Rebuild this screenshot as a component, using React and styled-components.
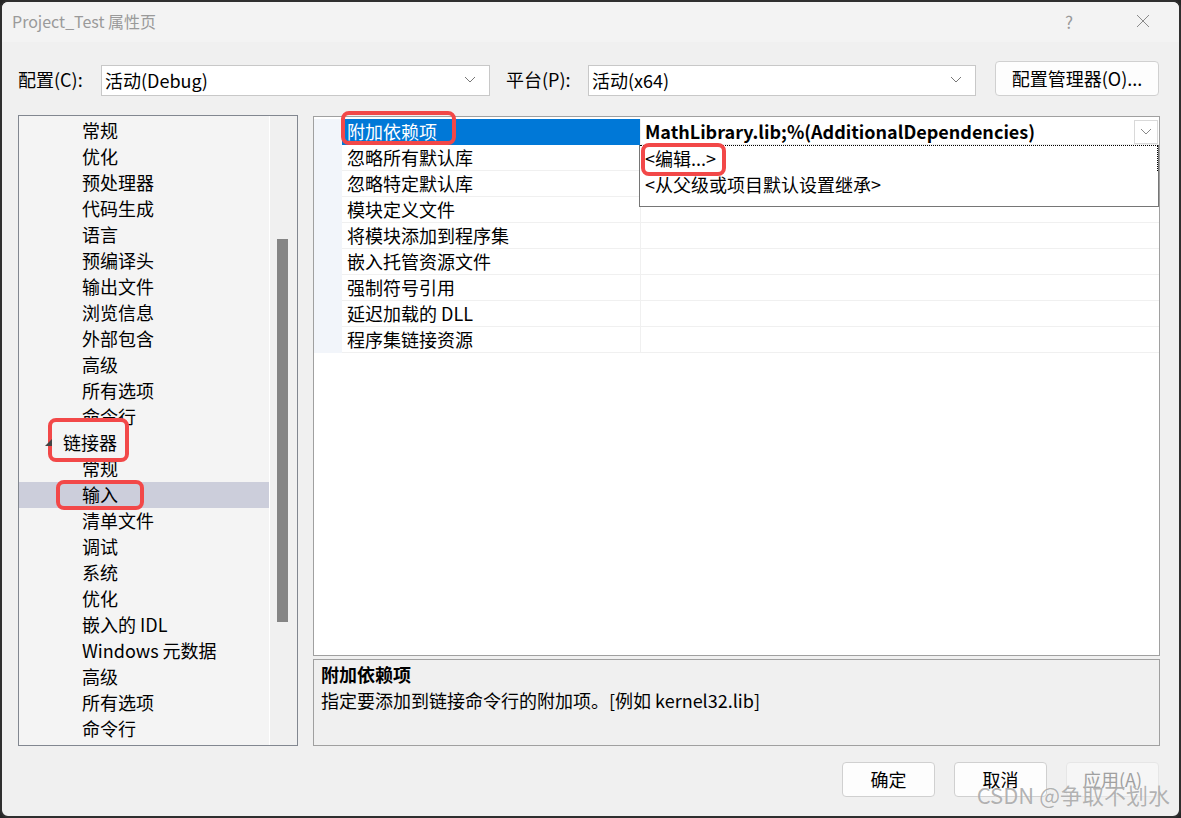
import React from "react";
import styled, { createGlobalStyle } from "styled-components";

const GlobalStyle = createGlobalStyle`
  html, body {
    margin: 0;
    padding: 0;
    background: #262626;
  }
  body {
    font-family: "Noto Sans CJK SC", "Noto Sans", sans-serif;
  }
  * {
    box-sizing: border-box;
  }
`;

const Window = styled.div`
  position: relative;
  width: 1181px;
  height: 818px;
  background: #f0f0f0;
  border: 2px solid #2f2f2f;
  border-radius: 8px;
  overflow: hidden;
  display: flex;
  flex-direction: column;
  color: #000;
`;

const TitleBar = styled.div`
  height: 40px;
  flex: none;
  background: #f3f3f3;
  display: flex;
  align-items: center;
  padding-left: 10px;
  padding-bottom: 2px;
  font-size: 16px;
  color: #9a9a9a;
  & > .title {
    flex: 1;
  }
  & > .help {
    width: 20px;
    text-align: center;
    font-size: 17px;
    color: #9a9a9a;
    margin-right: 56px;
  }
  & > .close {
    width: 16px;
    height: 16px;
    margin-right: 28px;
  }
`;

const ConfigRow = styled.div`
  flex: none;
  margin-top: 19px;
  height: 35px;
  padding: 0 20px 0 16px;
  display: flex;
  align-items: flex-end;
`;

const Label = styled.div`
  width: ${(p) => p.$w}px;
  height: 31px;
  line-height: 29px;
  font-size: 18px;
  white-space: nowrap;
`;

const Select = styled.div`
  width: ${(p) => p.$w}px;
  height: 31px;
  background: #fff;
  border: 1px solid #c8c8c8;
  display: flex;
  align-items: center;
  padding: 0 13px 2px 3px;
  font-size: 18px;
  margin-right: ${(p) => p.$mr || 0}px;
  & > span {
    flex: 1;
  }
`;

const Button = styled.div`
  width: ${(p) => p.$w}px;
  height: 35px;
  display: flex;
  align-items: center;
  justify-content: center;
  padding-bottom: 2px;
  border: 1px solid ${(p) => (p.$disabled ? "#e6e6e6" : "#d0d0d0")};
  border-radius: 4px;
  background: ${(p) => (p.$disabled ? "#f6f6f6" : "#fdfdfd")};
  color: ${(p) => (p.$disabled ? "#a0a0a0" : "#000")};
  font-size: 18px;
  margin-left: ${(p) => p.$ml || 0}px;
`;

const Main = styled.div`
  flex: none;
  margin-top: 19px;
  height: 631px;
  padding: 0 19px 0 16px;
  display: flex;
  gap: 15px;
`;

const Tree = styled.div`
  width: 280px;
  border: 1px solid #828790;
  background: #f4f4f4;
  display: flex;
`;

const TreeList = styled.div`
  flex: 1;
  padding-top: 2px;
  overflow: hidden;
  border-right: 1px solid #fff;
`;

const TreeRow = styled.div`
  position: relative;
  z-index: ${(p) => (p.$top ? 2 : "auto")};
  height: 26px;
  line-height: 24px;
  font-size: 18px;
  padding-left: ${(p) => (p.$level === 1 ? 26 : 63)}px;
  padding-bottom: 2px;
  background: ${(p) => (p.$selected ? "#cccedb" : "transparent")};
  white-space: nowrap;
  display: flex;
  align-items: center;
  & > svg {
    margin-right: 11px;
  }
`;

const ScrollTrack = styled.div`
  width: 27px;
  background: #f0f0f0;
  padding: 123px 0 0 7px;
  & > div {
    width: 11px;
    height: 383px;
    background: #858585;
  }
`;

const RightCol = styled.div`
  flex: 1;
  display: flex;
  flex-direction: column;
  gap: 3px;
`;

const Grid = styled.div`
  position: relative;
  flex: 1;
  margin-top: 1px;
  padding-top: 2px;
  border: 1px solid #a0a0a0;
  background: #fff;
`;

const GridRow = styled.div`
  display: flex;
  height: 26px;
  & > .gutter {
    width: 28px;
    background: #f2f5fa;
  }
  & > .name {
    width: 298px;
    padding-left: 5px;
    line-height: 24px;
    font-size: 18px;
    white-space: nowrap;
    border-bottom: 1px solid ${(p) => (p.$selected ? "#0078d7" : "#f0f0f0")};
    background: ${(p) => (p.$selected ? "#0078d7" : "#fff")};
    color: ${(p) => (p.$selected ? "#fff" : "#000")};
  }
  & > .value {
    flex: 1;
    display: flex;
    align-items: center;
    padding-left: 4px;
    border-left: 1px solid #f0f0f0;
    border-bottom: 1px solid #f0f0f0;
    font-size: 18px;
    font-weight: bold;
    white-space: nowrap;
  }
  & > .value > span {
    flex: 1;
    padding-bottom: 2px;
  }
`;

const DropButton = styled.div`
  width: 24px;
  height: 24px;
  margin-right: 1px;
  border: 1px solid #d9d9d9;
  background: #fff;
  display: flex;
  align-items: center;
  justify-content: center;
`;

const Popup = styled.div`
  position: absolute;
  left: 325px;
  top: 28px;
  width: 520px;
  height: 62px;
  background: #fff;
  border: 1px solid #767676;
  border-top: none;
  z-index: 1;
`;

const PopupItem = styled.div`
  height: 26px;
  line-height: 25px;
  padding-left: 5px;
  font-size: 18px;
  border-top: 1px dotted ${(p) => (p.$focus ? "#000" : "transparent")};
  border-right: 1px dotted ${(p) => (p.$focus ? "#000" : "transparent")};
`;

const Desc = styled.div`
  height: 87px;
  flex: none;
  border: 1px solid #a0a0a0;
  background: #f0f0f0;
  padding: 1px 7px;
  font-size: 18px;
  line-height: 26px;
  & > .head {
    font-weight: bold;
  }
`;

const Footer = styled.div`
  flex: none;
  margin-top: 16px;
  padding-right: 20px;
  display: flex;
  justify-content: flex-end;
  gap: 19px;
`;

const Mark = styled.div`
  position: absolute;
  left: ${(p) => p.$x - 2}px;
  top: ${(p) => p.$y - 2}px;
  width: ${(p) => p.$w}px;
  height: ${(p) => p.$h}px;
  border: 4px solid #f24848;
  border-radius: 8px;
  background: ${(p) => p.$fill || "transparent"};
  z-index: 1;
`;

const Watermark = styled.div`
  position: absolute;
  right: 9px;
  bottom: 6px;
  font-size: 22px;
  color: rgba(128, 128, 128, 0.6);
  text-shadow: 0 0 1px rgba(255, 255, 255, 0.8);
  z-index: 3;
  white-space: nowrap;
`;

const Chevron = ({ color = "#777" }) => (
  <svg width="12" height="7" viewBox="0 0 12 7">
    <polyline points="1,1 6,6 11,1" fill="none" stroke={color} strokeWidth="1" />
  </svg>
);

const treeItems = [
  ["常规", 2],
  ["优化", 2],
  ["预处理器", 2],
  ["代码生成", 2],
  ["语言", 2],
  ["预编译头", 2],
  ["输出文件", 2],
  ["浏览信息", 2],
  ["外部包含", 2],
  ["高级", 2],
  ["所有选项", 2],
  ["命令行", 2],
  ["链接器", 1],
  ["常规", 2],
  ["输入", 2],
  ["清单文件", 2],
  ["调试", 2],
  ["系统", 2],
  ["优化", 2],
  ["嵌入的 IDL", 2],
  ["Windows 元数据", 2],
  ["高级", 2],
  ["所有选项", 2],
  ["命令行", 2],
];

const props = [
  "附加依赖项",
  "忽略所有默认库",
  "忽略特定默认库",
  "模块定义文件",
  "将模块添加到程序集",
  "嵌入托管资源文件",
  "强制符号引用",
  "延迟加载的 DLL",
  "程序集链接资源",
];

function App() {
  return (
    <>
      <GlobalStyle />
      <Window>
        <TitleBar>
          <span className="title">Project_Test 属性页</span>
          <span className="help">?</span>
          <svg className="close" viewBox="0 0 16 16">
            <path d="M2 2 L14 14 M14 2 L2 14" stroke="#8a8a8a" strokeWidth="1" />
          </svg>
        </TitleBar>

        <ConfigRow>
          <Label $w={83}>配置(C):</Label>
          <Select $w={389} $mr={16}>
            <span>活动(Debug)</span>
            <Chevron />
          </Select>
          <Label $w={82}>平台(P):</Label>
          <Select $w={388}>
            <span>活动(x64)</span>
            <Chevron />
          </Select>
          <Button $w={164} $ml={19}>配置管理器(O)...</Button>
        </ConfigRow>

        <Main>
          <Tree>
            <TreeList>
              {treeItems.map(([label, level], i) => (
                <TreeRow key={i} $level={level} $selected={i === 14} $top={level === 1}>
                  {level === 1 && (
                    <svg width="7" height="7" viewBox="0 0 7 7">
                      <polygon points="7,0 7,7 0,7" fill="#444" />
                    </svg>
                  )}
                  {label}
                </TreeRow>
              ))}
            </TreeList>
            <ScrollTrack>
              <div />
            </ScrollTrack>
          </Tree>

          <RightCol>
            <Grid>
              {props.map((name, i) => (
                <GridRow key={name} $selected={i === 0}>
                  <div className="gutter" />
                  <div className="name">{name}</div>
                  <div className="value">
                    {i === 0 && (
                      <>
                        <span>MathLibrary.lib;%(AdditionalDependencies)</span>
                        <DropButton>
                          <Chevron color="#888" />
                        </DropButton>
                      </>
                    )}
                  </div>
                </GridRow>
              ))}
              <Popup>
                <PopupItem $focus>&lt;编辑...&gt;</PopupItem>
                <PopupItem>&lt;从父级或项目默认设置继承&gt;</PopupItem>
              </Popup>
            </Grid>
            <Desc>
              <div className="head">附加依赖项</div>
              <div>指定要添加到链接命令行的附加项。[例如 kernel32.lib]</div>
            </Desc>
          </RightCol>
        </Main>

        <Footer>
          <Button $w={93}>确定</Button>
          <Button $w={93}>取消</Button>
          <Button $w={93} $disabled>
            应用(A)
          </Button>
        </Footer>

        <Mark $x={341} $y={111} $w={115} $h={34} />
        <Mark $x={641} $y={143} $w={85} $h={33} />
        <Mark $x={48} $y={418} $w={81} $h={44} $fill="#f4f4f4" />
        <Mark $x={56} $y={480} $w={88} $h={30} />
        <Watermark>CSDN @争取不划水</Watermark>
      </Window>
    </>
  );
}

export default App;
